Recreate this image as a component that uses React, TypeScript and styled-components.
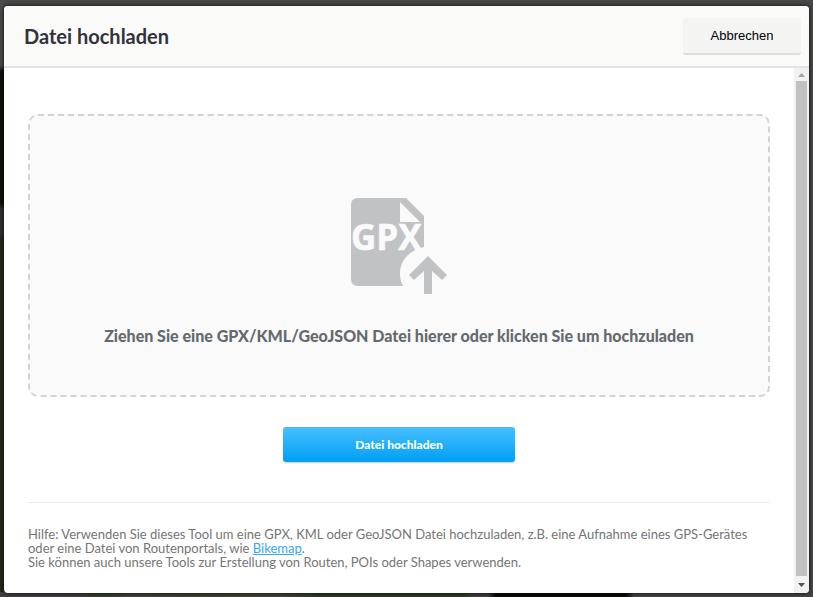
import React from "react";
import styled, { createGlobalStyle } from "styled-components";

const GlobalStyle = createGlobalStyle`
  * { box-sizing: border-box; }
  body { margin: 0; font-family: Lato, "Liberation Sans", sans-serif; }
`;

const Backdrop = styled.div`
  min-height: 100vh;
  display: flex;
  padding: 6px 4px 4px;
  background:
    linear-gradient(90deg, #403e40 0 9%, #34402a 13%, #434240 16%, #3e4030 24%, #45443a 34%, #2e3a24 39% 57%, #403e40 58% 60%, #0d0b0a 61% 77%, #464444 78%) bottom / 100% 5px no-repeat,
    linear-gradient(#4a4a4a 0 11%, #12100c 12% 34%, #303030 35% 39%, #23291a 40% 100%) left / 5px 100% no-repeat,
    #484848;
`;

const Dialog = styled.section`
  flex: 1;
  display: flex;
  flex-direction: column;
  overflow: hidden;
  border-radius: 4px;
  background: #fff;
  box-shadow: 0 0 4px rgba(0, 0, 0, 0.9);
`;

const Header = styled.header`
  display: flex;
  align-items: center;
  justify-content: space-between;
  height: 62px;
  padding: 0 8px 0 20px;
  background: #fafaf8;
  border-bottom: 2px solid #e4e4e4;
`;

const Title = styled.h1`
  margin: 0;
  font-size: 20px;
  line-height: 24px;
  font-weight: 700;
  color: #32323c;
`;

const CancelButton = styled.button`
  width: 118px;
  height: 37px;
  padding: 0;
  border: 0;
  border-bottom: 2px solid #dededd;
  border-radius: 3px;
  background: #f4f4f3;
  color: #000;
  font: 13px "Liberation Sans", Arial, sans-serif;
`;

const Body = styled.div`
  flex: 1;
  display: flex;
`;

const Content = styled.main`
  flex: 1;
  display: flex;
  flex-direction: column;
  padding: 46px 24px 0;
`;

const DropZone = styled.label`
  display: flex;
  flex-direction: column;
  align-items: center;
  height: 283px;
  padding-top: 80px;
  border: 2px dashed #d3d3d3;
  border-radius: 10px;
  background: #fafafa;
  cursor: pointer;
`;

const FileInput = styled.input`
  width: 0;
  height: 0;
  padding: 0;
  border: 0;
  opacity: 0;
  overflow: hidden;
`;

const FileIcon = styled.svg`
  display: block;
  width: 100px;
  height: 100px;
`;

const DropText = styled.span`
  margin-top: 28px;
  font-size: 16px;
  line-height: 24px;
  font-weight: 900;
  color: #636a70;
  text-align: center;
`;

const UploadButton = styled.button`
  align-self: center;
  width: 232px;
  height: 35px;
  margin-top: 30px;
  padding: 0;
  border: 0;
  border-radius: 3px;
  background: linear-gradient(#48bfff, #009ff5);
  box-shadow: 0 1px 2px rgba(0, 0, 0, 0.2);
  color: #fff;
  font: 900 12px Lato, sans-serif;
`;

const Help = styled.p`
  margin: 40px 0 0;
  padding-top: 24px;
  border-top: 1px solid #ebebeb;
  font-size: 13px;
  line-height: 14px;
  font-weight: 400;
  color: #757575;
`;

const HelpLink = styled.a`
  color: #35a7f5;
  text-decoration: underline;
`;

const ScrollTrack = styled.div`
  display: flex;
  flex-direction: column;
  width: 15px;
  padding: 0 2px;
  background: #f1f1f1;
`;

const ScrollThumb = styled.div`
  flex: 1;
  background: #c1c1c1;
`;

const ScrollButton = styled.button<{ $tall?: boolean }>`
  display: flex;
  align-items: center;
  justify-content: center;
  height: ${(p) => (p.$tall ? 17 : 13)}px;
  padding: 0;
  border: 0;
  background: transparent;
  color: ${(p) => (p.$tall ? "#505050" : "#a3a3a3")};
`;

function GpxFileIcon() {
  return (
    <FileIcon viewBox="0 0 100 100" aria-hidden="true">
      <path
        fill="#c1c2c4"
        d="M9 2H57L75 20V51C60 54 51 65 51 77Q51 85 54 90H9Q2 90 2 83V9Q2 2 9 2Z"
      />
      <path fill="#fafafa" d="M51 6V26H71Z" />
      <text x="2" y="54" fill="#fafafa" stroke="#fafafa" strokeWidth="0.6" fontFamily="Open Sans, sans-serif" fontSize="35" fontWeight="700">
        GPX
      </text>
      <path fill="#c1c2c4" d="M79 60L98 79L93 84L83 75V98H75V75L65 84L60 79Z" />
    </FileIcon>
  );
}

export default function App() {
  return (
    <>
      <GlobalStyle />
      <Backdrop>
        <Dialog role="dialog" aria-labelledby="dialog-title">
          <Header>
            <Title id="dialog-title">Datei hochladen</Title>
            <CancelButton type="button">Abbrechen</CancelButton>
          </Header>
          <Body>
            <Content>
              <DropZone htmlFor="track-file">
                <GpxFileIcon />
                <DropText>Ziehen Sie eine GPX/KML/GeoJSON Datei hierer oder klicken Sie um hochzuladen</DropText>
                <FileInput id="track-file" type="file" accept=".gpx,.kml,.geojson" />
              </DropZone>
              <UploadButton type="button">Datei hochladen</UploadButton>
              <Help>
                Hilfe: Verwenden Sie dieses Tool um eine GPX, KML oder GeoJSON Datei hochzuladen, z.B. eine
                Aufnahme eines GPS-Gerätes oder eine Datei von Routenportals, wie{" "}
                <HelpLink href="#bikemap">Bikemap</HelpLink>.
                <br />
                Sie können auch unsere Tools zur Erstellung von Routen, POIs oder Shapes verwenden.
              </Help>
            </Content>
            <ScrollTrack>
              <ScrollButton type="button" aria-label="Nach oben">
                <svg width="7" height="4" viewBox="0 0 7 4"><path fill="currentColor" d="M0 4L3.5 0L7 4Z" /></svg>
              </ScrollButton>
              <ScrollThumb />
              <ScrollButton type="button" $tall aria-label="Nach unten">
                <svg width="7" height="4" viewBox="0 0 7 4"><path fill="currentColor" d="M0 0H7L3.5 4Z" /></svg>
              </ScrollButton>
            </ScrollTrack>
          </Body>
        </Dialog>
      </Backdrop>
    </>
  );
}
